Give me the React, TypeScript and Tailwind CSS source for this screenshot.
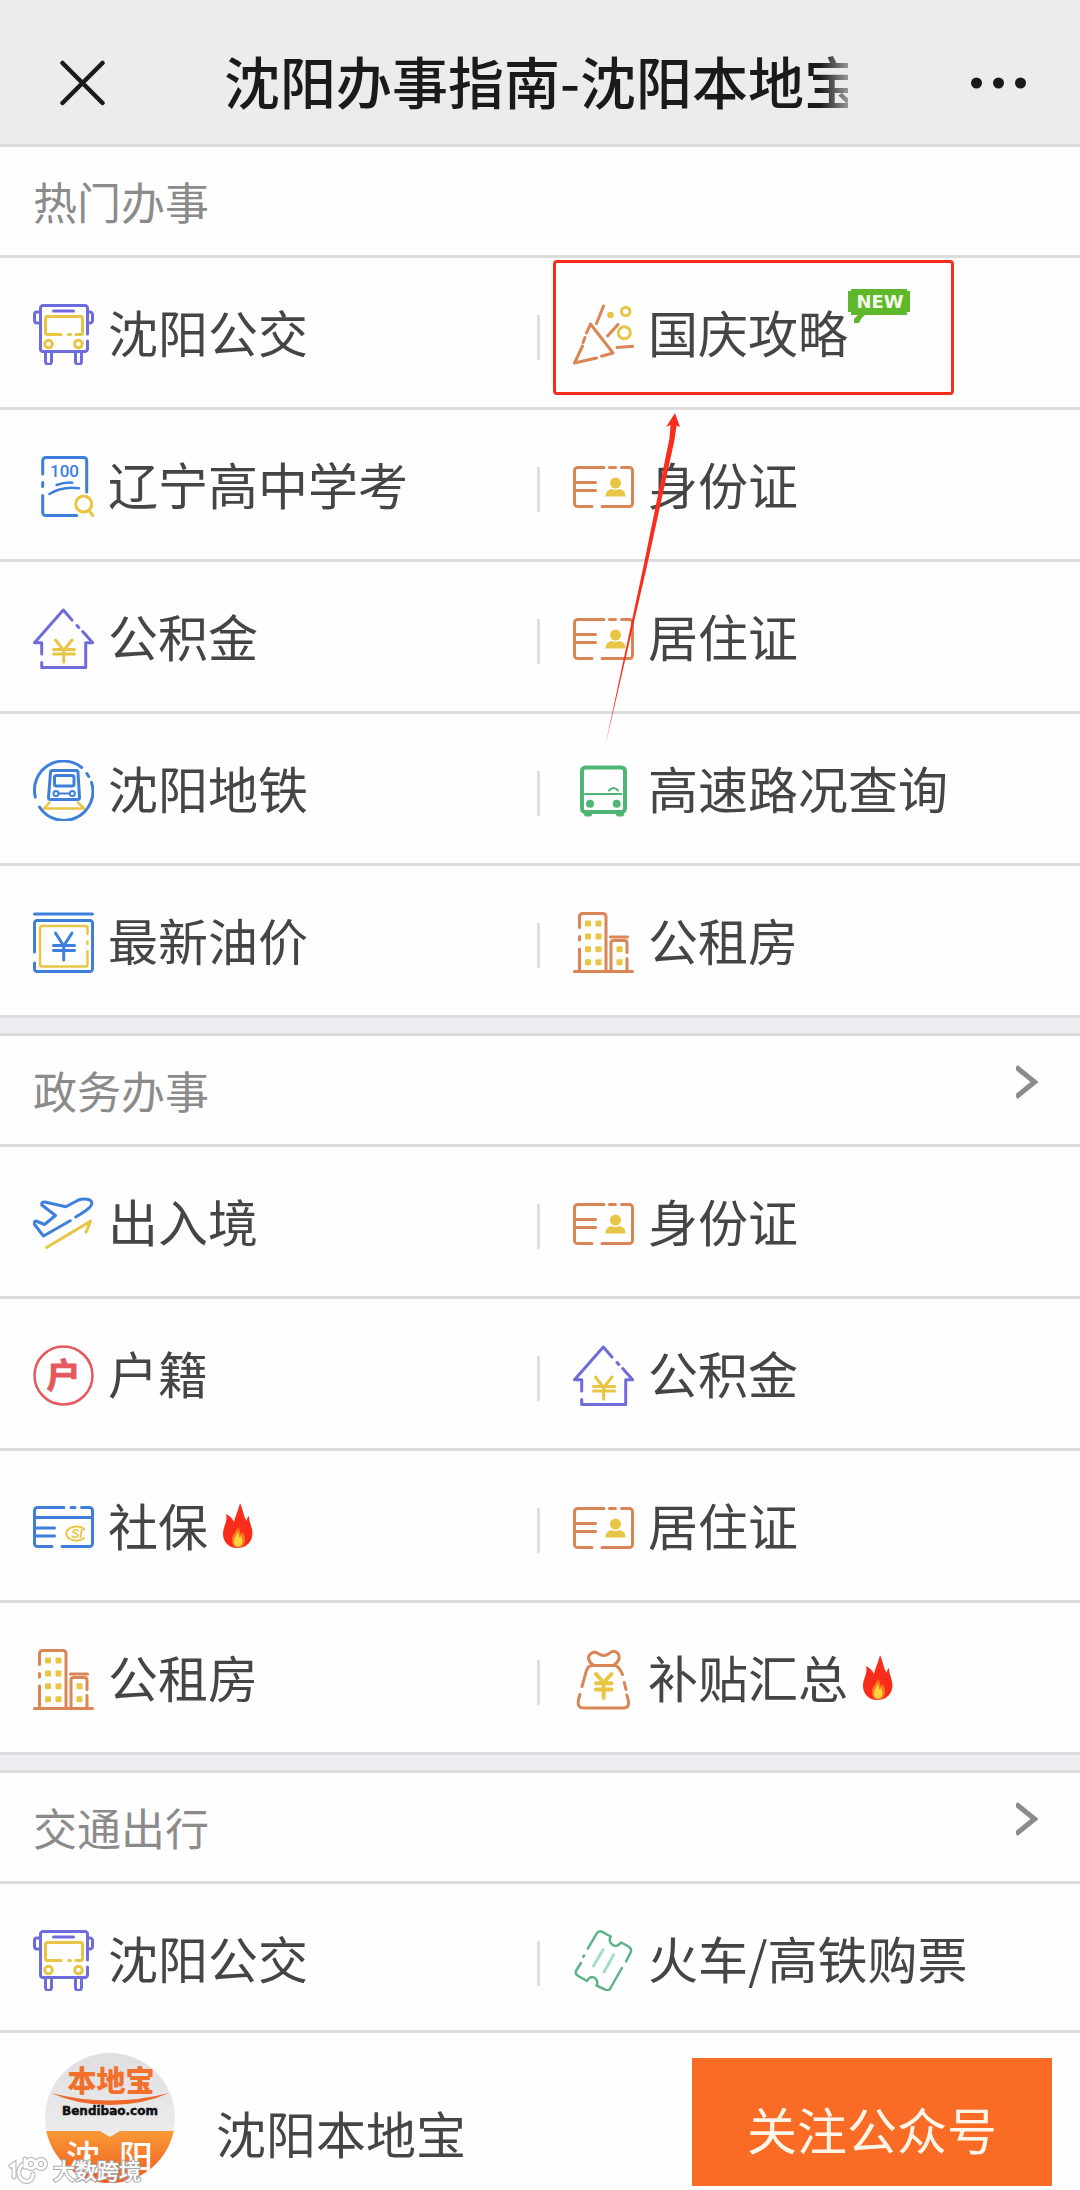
import React from 'react';

const PURPLE = '#6e6cdb';
const YELLOW = '#e8c545';
const ORANGE = '#d98555';
const BLUE = '#3f7fdc';
const GREEN = '#4fb574';
const RED = '#e45a5c';

type IconName =
  | 'bus'
  | 'party'
  | 'exam'
  | 'card'
  | 'house'
  | 'metro'
  | 'road'
  | 'oil'
  | 'building'
  | 'plane'
  | 'huji'
  | 'social'
  | 'bag'
  | 'ticket';

interface Item {
  label: string;
  icon: IconName;
  hot?: boolean;
  isNew?: boolean;
  marked?: boolean;
}

interface Section {
  title: string;
  more: boolean;
  items: Item[];
}

const sections: Section[] = [
  {
    title: '热门办事',
    more: false,
    items: [
      { label: '沈阳公交', icon: 'bus' },
      { label: '国庆攻略', icon: 'party', isNew: true, marked: true },
      { label: '辽宁高中学考', icon: 'exam' },
      { label: '身份证', icon: 'card' },
      { label: '公积金', icon: 'house' },
      { label: '居住证', icon: 'card' },
      { label: '沈阳地铁', icon: 'metro' },
      { label: '高速路况查询', icon: 'road' },
      { label: '最新油价', icon: 'oil' },
      { label: '公租房', icon: 'building' },
    ],
  },
  {
    title: '政务办事',
    more: true,
    items: [
      { label: '出入境', icon: 'plane' },
      { label: '身份证', icon: 'card' },
      { label: '户籍', icon: 'huji' },
      { label: '公积金', icon: 'house' },
      { label: '社保', icon: 'social', hot: true },
      { label: '居住证', icon: 'card' },
      { label: '公租房', icon: 'building' },
      { label: '补贴汇总', icon: 'bag', hot: true },
    ],
  },
  {
    title: '交通出行',
    more: true,
    items: [
      { label: '沈阳公交', icon: 'bus' },
      { label: '火车/高铁购票', icon: 'ticket' },
    ],
  },
];

const icons: Record<IconName, React.ReactNode> = {
  bus: (
    <>
      <g stroke={PURPLE}>
        <path d="M54.5 30V4a2.500 2.500 0 0 0-2.500-2.500H10A2.500 2.500 0 0 0 7.500 4v41A2.500 2.500 0 0 0 10 47.500h42a2.500 2.500 0 0 0 2.500-2.500v-8" />
        <path d="M7 8H4a2.500 2.500 0 0 0-2.500 2.500v6A2.500 2.500 0 0 0 4 19h3M55 8h2a2.500 2.500 0 0 1 2.500 2.500v6A2.500 2.500 0 0 1 57 19h-2" />
        <path d="M20.500 7h20M12.500 48v9.500a3 3 0 0 0 6 0V48M42.500 48v9.500a3 3 0 0 0 6 0V48" />
      </g>
      <g stroke={YELLOW}>
        <path d="M28 30.500H14.500a2 2 0 0 1-2-2V14.500a2 2 0 0 1 2-2h33a2 2 0 0 1 2 2v14a2 2 0 0 1-2 2H43M35.500 30.500h2" />
        <circle cx="15.500" cy="40" r="3.800" />
        <circle cx="45.500" cy="40" r="3.800" />
      </g>
    </>
  ),
  party: (
    <>
      <g stroke={ORANGE}>
        <path d="M13.500 29l4-9L40 49l-11.500 3.200M23.500 54L1.500 59l8-17M12 33.500l-2 5" />
        <path d="M30.500 2l-7 17.500M45 20.500L34.500 32M44 43.500l16-1.300" />
      </g>
      <g stroke={YELLOW}>
        <circle cx="37.500" cy="11" r="1.800" fill={YELLOW} />
        <circle cx="52.700" cy="7.500" r="4.300" />
        <circle cx="51.300" cy="28.700" r="6" />
      </g>
    </>
  ),
  exam: (
    <>
      <g stroke={BLUE}>
        <path d="M9.700 18V4.500a3 3 0 0 1 3-3h38a3 3 0 0 1 3 3V36M9.700 26.500v4M9.700 39.500v17a3 3 0 0 0 3 3h31" />
        <path d="M23.700 29q8-3 15.600-2.300M16.500 38q13-8 29.500-5.700" strokeWidth="2.500" />
      </g>
      <text
        x="31.500"
        y="21"
        textAnchor="middle"
        fontSize="17"
        fontWeight="500"
        fill={BLUE}
        stroke="none"
        fontFamily="'Liberation Sans Narrow', 'Roboto', sans-serif"
      >
        100
      </text>
      <g stroke={YELLOW}>
        <circle cx="50.700" cy="48" r="8" />
        <path d="M56 54.500l4 5" />
      </g>
    </>
  ),
  card: (
    <>
      <path
        stroke={ORANGE}
        d="M31 11.500H4.500a3 3 0 0 0-3 3v33a3 3 0 0 0 3 3H19M36.500 11.500h6M48.500 11.500h8a3 3 0 0 1 3 3v33a3 3 0 0 1-3 3H29M2 26.500h20.500M2 34.500h20.500"
      />
      <circle cx="42.500" cy="27" r="5.500" fill={YELLOW} stroke="none" />
      <path d="M32.500 40.500c0-5 3.500-7 6-7.500q4 2 8 0c3 .5 6 2.500 6 7.500z" fill={YELLOW} stroke="none" />
    </>
  ),
  house: (
    <>
      <path
        stroke={PURPLE}
        d="M39 12L30.300 2 1.500 34.700h7.200V46M8.700 54.500v5h44V34.700h7L49.700 23.500M44 17.500l1.800 2"
      />
      <path stroke={YELLOW} d="M22.500 32l8.200 10.500L39 32M30.700 42v12M20.500 41.500h21M20.500 46h21" />
    </>
  ),
  metro: (
    <>
      <g stroke={BLUE}>
        <path d="M2.300 37A29 29 0 0 1 48.700 7.500M58.500 22.400A29 29 0 0 1 6.500 47M53.800 13.500l2 3" />
        <path d="M19.500 10.500h23.500a2 2 0 0 1 2 2l1.500 25a2 2 0 0 1-2 2H17.500a2 2 0 0 1-2-2l2-25a2 2 0 0 1 2-2z" />
        <rect x="21.500" y="15.500" width="19.500" height="10.500" rx="2" />
        <path d="M26 33.500h10.500" strokeWidth="2" />
        <circle cx="23" cy="33.500" r="2.500" strokeWidth="2" />
        <circle cx="39.300" cy="33.500" r="2.500" strokeWidth="2" />
      </g>
      <path stroke={YELLOW} d="M16.500 42.500l-5.500 6h40l-6-6" strokeWidth="2.500" />
    </>
  ),
  road: (
    <g stroke={GREEN}>
      <rect x="9" y="7.500" width="43" height="44.500" rx="3.500" strokeWidth="4" />
      <path d="M12 34h36.500" strokeWidth="2" />
      <path d="M36 30.500q4.500-5 9 0" strokeWidth="2" />
      <circle cx="17" cy="43.800" r="4" fill={GREEN} stroke="none" />
      <circle cx="43.700" cy="43.800" r="4" fill={GREEN} stroke="none" />
      <path d="M13 54.500h4M45 54.500h4" strokeWidth="4" />
    </g>
  ),
  oil: (
    <>
      <path
        stroke={BLUE}
        d="M1.500 2h58M1.500 40V11a2.500 2.500 0 0 1 2.500-2.500h53a2.500 2.500 0 0 1 2.500 2.500v46a2.500 2.500 0 0 1-2.500 2.500H4A2.500 2.500 0 0 1 1.500 57v-6"
      />
      <path
        stroke={YELLOW}
        strokeWidth="2.500"
        d="M54.500 22v-6a2 2 0 0 0-2-2H9a2 2 0 0 0-2 2v36.500a2 2 0 0 0 2 2h43.500a2 2 0 0 0 2-2V39M54.500 29.500v2.500"
      />
      <path stroke={BLUE} d="M22.500 21l8.200 13L39 21M30.700 34v14M20.500 33.500h21M20.500 38.500h21" />
    </>
  ),
  building: (
    <>
      <path
        stroke={ORANGE}
        d="M6.500 15.500V4.500a3 3 0 0 1 3-3H30a3 3 0 0 1 3 3V59M6.500 24.500v3.500M6.500 37V59M1.500 59.500h58M37.500 25h17M38 59V31a2.500 2.500 0 0 1 2.500-2.500h11A2.500 2.500 0 0 1 54 31v9.500M54 46.500V59"
      />
      <g fill={YELLOW} stroke="none">
        {[8.5, 21.5, 34.2, 47.2].map((y) => (
          <React.Fragment key={y}>
            <rect x="12" y={y} width="6" height="6" rx="1" />
            <rect x="22.500" y={y} width="6" height="6" rx="1" />
          </React.Fragment>
        ))}
        <rect x="43.500" y="34.200" width="6" height="6" rx="1" />
        <rect x="43.500" y="47.200" width="6" height="6" rx="1" />
      </g>
    </>
  ),
  plane: (
    <>
      <path
        stroke={BLUE}
        d="M37.200 27.800L10.500 43 1.500 31.500q-1-3 1.500-3.500l8.500 3.500 11-9L8.800 12q-.5-3.500 3-3l21 4.800L45.500 7q5-2 11-.2 4.500 2.200.5 7.200Q54 17.500 42.700 24"
      />
      <path stroke={YELLOW} d="M13.500 54.500l44-26.300-4.500 11" />
    </>
  ),
  huji: (
    <>
      <circle cx="30.500" cy="30.500" r="29" stroke={RED} strokeWidth="2.500" />
      <text
        x="30.500"
        y="43"
        textAnchor="middle"
        fontSize="34"
        fontWeight="700"
        fill={RED}
        stroke={RED}
        strokeWidth="1"
        fontFamily="'Noto Sans CJK SC', sans-serif"
      >
        户
      </text>
    </>
  ),
  social: (
    <>
      <path
        stroke={BLUE}
        d="M31 10.500H4.500a3 3 0 0 0-3 3v33a3 3 0 0 0 3 3H19M38 10.500h4M48.500 10.500h8a3 3 0 0 1 3 3v33a3 3 0 0 1-3 3H29M2 20.500h57.500M2 31h19.500M2 39h19.500"
      />
      <path stroke={YELLOW} strokeWidth="2" d="M51.500 32.500a10 7 0 1 0-.5 8.500" />
      <text
        x="44"
        y="41"
        textAnchor="middle"
        fontSize="12"
        fontWeight="700"
        fontStyle="italic"
        fill={YELLOW}
        stroke="none"
        fontFamily="'Liberation Sans', sans-serif"
      >
        SI
      </text>
    </>
  ),
  bag: (
    <>
      <g stroke={ORANGE}>
        <path d="M19.500 15.500q-6-5-3-9.500 4-5 8.500-1.500 6 4 11 0 5-4.500 9 0 3.500 6-3.500 11" />
        <path d="M9 37.500l4.500-16q1.500-5 6-5h22q4.500.5 8 9M7 45.500Q3.500 55 6.500 57.500q1 1.500 5 1.500H50q5 0 5.500-4 .5-3-1.700-9M51.200 33.500l1.800 7" />
      </g>
      <path stroke={YELLOW} strokeWidth="4" d="M23 25l7.600 8.500L38.500 25M30.600 33.500V49M23 34.300h15.500M23 40.500h15.500" />
    </>
  ),
  ticket: (
    <>
      <path
        stroke="#5eb388"
        strokeWidth="2.500"
        d="M14.800 18.700l9.500-16q2-2.200 4.500-1l9 4.800c-3 5 1 9 4.500 9.500 3 0 4-2 6-3.500l8 4.500q2.500 2 1.500 5l-4.800 9.500M48.900 38L37.500 58q-1.500 3-4.500 2l-9.500-4.500c2-4-.5-8-4-8.500-3 0-4 1-5.500 4L4.500 45.500q-2.500-1.500-1.500-4.500l4.900-8M10.300 26.700l.8-1.200"
      />
      <path stroke="#a5dcc4" d="M30 19.700L20.500 36M40.600 24.700L31 42" />
    </>
  ),
};

const ItemIcon: React.FC<{ name: IconName }> = ({ name }) => (
  <svg
    viewBox="0 0 61 61"
    fill="none"
    strokeWidth="3"
    strokeLinecap="round"
    strokeLinejoin="round"
    className="size-[61px] shrink-0"
    aria-hidden="true"
  >
    {icons[name]}
  </svg>
);

const Flame: React.FC = () => (
  <svg viewBox="0 0 30 45" className="mb-1 ml-[15px] h-[45px] w-[30px] shrink-0" aria-hidden="true">
    <path
      d="M17 0C15 8 13 11 11 19 9 15 7 13 3 11 5 19 0 23 0 31c0 8 6 14 14 14 9 0 15.500-6 15.500-15C29.500 24 26 20 26 13c-2 2-2 3-2.500 5C20 12 20 6 17 0z"
      fill="#fb2c1c"
    />
    <path d="M15 24c-1 4-6 7-6 13 0 5 2.500 7.500 6 7.500s7-2 7-8c0-4-1-5-2-7l-2 2c-1-3-1-5-3-7.500z" fill="#fb7a22" />
    <path d="M14.500 29c-1 4-3.500 5-3.500 9.500 0 3.500 1.500 5 4 5s4.500-2 4.500-5.500c0-3-1-3.500-1.500-5l-1.500 1.500c-.5-2-.5-4-2-5.500z" fill="#fbd43c" />
  </svg>
);

const NewBadge: React.FC = () => (
  <svg viewBox="0 0 62 34" className="absolute -top-3 left-full h-[34px] w-[62px]" aria-label="NEW">
    <path d="M3 0h56v2h3v21h-3v3H17l-4 4-2 4H6v-4l4-4H3v-3H0V2h3z" fill="#5fb82c" />
    <text
      x="32"
      y="19"
      textAnchor="middle"
      fontSize="18"
      fontWeight="700"
      fill="#f4fbe9"
      fontFamily="'DejaVu Sans', sans-serif"
    >
      NEW
    </text>
  </svg>
);

// Red frame and the arrow that points up at it
const Callout: React.FC = () => (
  <>
    <span className="pointer-events-none absolute top-0.5 left-[13px] z-10 h-[135px] w-[401px] rounded border-[3px] border-[#fa2c1e]" />
    <svg
      viewBox="0 0 80 336"
      className="pointer-events-none absolute top-[155px] left-[61px] z-10 h-[336px] w-[80px]"
      aria-hidden="true"
    >
      <path d="M74 0l5 14-3.500-1.500L73.500 27 46 153 4 334 42.500 153 68.500 25l1-13-4.500 2z" fill="#fa2c1e" />
    </svg>
  </>
);

const GridItem: React.FC<{ item: Item; right: boolean }> = ({ item, right }) => (
  <a href="#" className="relative flex h-[152px] items-center border-b-[3px] border-[#dcdcdc] pt-[3px] pl-[33px]">
    <ItemIcon name={item.icon} />
    <span className="relative mb-1.5 ml-[14px] text-[50px] leading-[60px] whitespace-nowrap text-[#454545]">
      {item.label}
      {item.isNew && <NewBadge />}
    </span>
    {item.hot && <Flame />}
    {!right && <span className="mt-1.5 ml-auto h-[45px] w-[3px] bg-[#dedede]" />}
    {item.marked && <Callout />}
  </a>
);

const SectionHeader: React.FC<{ title: string; more: boolean }> = ({ title, more }) => (
  <div className="flex h-[111px] items-center justify-between border-b-[3px] border-[#dcdcdc] pr-[42px] pl-[33px]">
    <h2 className="text-[44px] leading-[60px] text-[#8b8b8b]">{title}</h2>
    {more && (
      <a href="#" aria-label={title} className="mb-4">
        <svg viewBox="0 0 22 36" className="h-9 w-[22px]" fill="none" stroke="#8b8b8b" strokeWidth="5">
          <path d="M0 3l18.500 15L0 33" />
        </svg>
      </a>
    )}
  </div>
);

const Logo: React.FC = () => (
  <svg viewBox="0 0 130 130" className="size-[130px] shrink-0" role="img" aria-label="本地宝">
    <defs>
      <clipPath id="logo-clip">
        <circle cx="65" cy="65" r="65" />
      </clipPath>
      <linearGradient id="logo-top" x1="0" y1="0" x2="0" y2="1">
        <stop offset="0" stopColor="#dfdfe1" />
        <stop offset="1" stopColor="#f4f4f5" />
      </linearGradient>
      <linearGradient id="logo-bottom" x1="0" y1="0" x2="0" y2="1">
        <stop offset="0" stopColor="#f99a35" />
        <stop offset="1" stopColor="#ee5a24" />
      </linearGradient>
    </defs>
    <g clipPath="url(#logo-clip)">
      <rect width="130" height="130" fill="url(#logo-top)" />
      <path d="M0 78h55l10 6 10-6h55v52H0z" fill="url(#logo-bottom)" />
      <path d="M6 40q59 15 118 0-26 12-59 12T6 40z" fill="#ee6a2c" />
      <text x="66" y="39" textAnchor="middle" fontSize="29" fontWeight="800" fill="#f0702c">
        本地宝
      </text>
      <text
        x="65"
        y="62"
        textAnchor="middle"
        fontSize="12"
        fontWeight="700"
        fill="#111"
        stroke="#111"
        strokeWidth="0.500"
        fontFamily="'DejaVu Sans', sans-serif"
      >
        Bendibao.com
      </text>
      <g fill="#fff" fontSize="34" fontWeight="500">
        <text x="21" y="117">沈</text>
        <text x="74" y="117">阳</text>
      </g>
    </g>
  </svg>
);

const Watermark: React.FC = () => (
  <div className="pointer-events-none absolute bottom-1 left-2 flex items-center gap-1">
    <svg viewBox="0 0 40 30" className="h-[30px] w-10" fill="none" strokeLinecap="round" aria-hidden="true">
      {[
        { color: '#b5b5b5', width: 5 },
        { color: '#ffffff', width: 3 },
      ].map((s) => (
        <g key={s.color} stroke={s.color} strokeWidth={s.width}>
          <path d="M3 10l3-2v13" />
          <path d="M14 9q-4 4-3 10 3 8 10 6 4-2 4-7" />
          <path d="M17 3v8" />
          <circle cx="23" cy="8" r="4.500" />
          <circle cx="33" cy="8" r="4.500" />
        </g>
      ))}
    </svg>
    <svg viewBox="0 0 92 30" className="h-[30px] w-[92px]">
      <text
        x="1"
        y="23"
        fontSize="22"
        fontWeight="500"
        fill="#fff"
        stroke="#a8a8a8"
        strokeWidth="2"
        paintOrder="stroke"
      >
        大数跨境
      </text>
    </svg>
  </div>
);

const App: React.FC = () => {
  return (
    <div className="flex h-screen flex-col overflow-hidden bg-[#fefefe] font-['Noto_Sans_CJK_SC',sans-serif]">
      <header className="flex h-[147px] shrink-0 items-center border-b-[3px] border-[#dcdcdc] bg-[#ececec] pt-[21px] pr-[54px] pl-[60px]">
        <button type="button" aria-label="关闭" className="shrink-0">
          <svg viewBox="0 0 45 46" className="h-[46px] w-[45px]" stroke="#1a1a1a" strokeWidth="4.500" strokeLinecap="round">
            <path d="M2.500 3l40 40M42.500 3l-40 40" />
          </svg>
        </button>
        <h1 className="mr-[123px] mb-1.5 ml-[119px] min-w-0 flex-1 overflow-hidden text-[56px] leading-[72px] font-medium whitespace-nowrap text-[#1a1a1a] [mask-image:linear-gradient(to_right,#000_calc(100%-28px),rgba(0,0,0,0.4))]">
          沈阳办事指南-沈阳本地宝
        </h1>
        <button type="button" aria-label="更多" className="shrink-0">
          <svg viewBox="0 0 55 12" className="h-3 w-[55px]" fill="#1a1a1a">
            <circle cx="5.500" cy="6" r="5.500" />
            <circle cx="27.500" cy="6" r="5.500" />
            <circle cx="49.500" cy="6" r="5.500" />
          </svg>
        </button>
      </header>

      <main className="min-h-0 flex-1 overflow-y-auto bg-[#eeeef2] [scrollbar-width:none]">
        {sections.map((section, i) => (
          <section key={section.title} className={i > 0 ? 'mt-[15px] border-t-[3px] border-[#dcdcdc] bg-[#fefefe]' : 'bg-[#fefefe]'}>
            <SectionHeader title={section.title} more={section.more} />
            <div className="grid grid-cols-2">
              {section.items.map((item, n) => (
                <GridItem key={item.label} item={item} right={n % 2 === 1} />
              ))}
            </div>
          </section>
        ))}
      </main>

      <footer className="relative flex h-[160px] shrink-0 items-center border-t-[3px] border-[#dcdcdc] bg-[#fefefe] pt-3 pr-7 pl-[45px]">
        <Logo />
        <span className="mt-7 ml-[41px] text-[50px] leading-[60px] text-[#454545]">沈阳本地宝</span>
        <button type="button" className="mt-2 ml-auto h-[128px] w-[360px] bg-[#fa6b26] pt-3 text-[50px] leading-[60px] text-[#fff6ea]">
          关注公众号
        </button>
        <Watermark />
      </footer>
    </div>
  );
};

export default App;
